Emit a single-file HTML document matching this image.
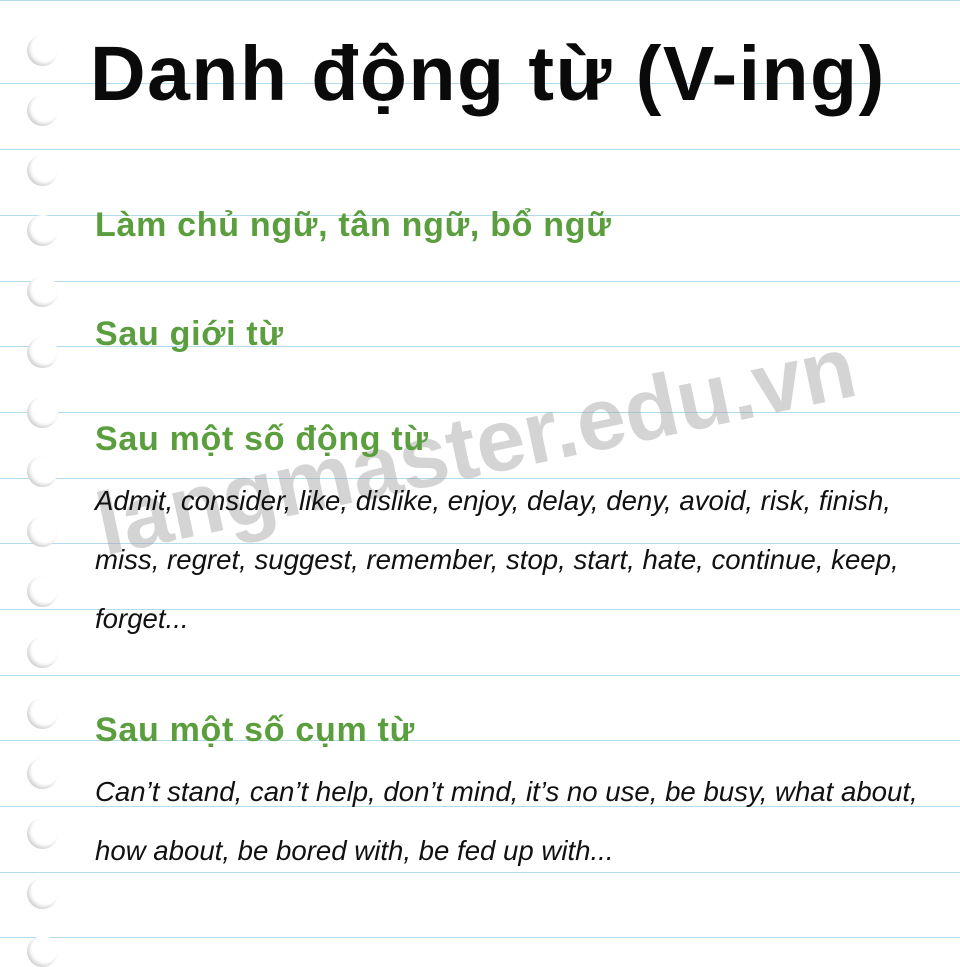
<!DOCTYPE html>
<html><head><meta charset="utf-8"><style>
html,body{margin:0;padding:0}
body{width:960px;height:960px;position:relative;overflow:hidden;background:#fff;font-family:"Liberation Sans","DejaVu Sans",sans-serif}
.l{position:absolute;left:0;width:960px;height:1px;background:#b3dbee}
.h{position:absolute;left:27px;width:31px;height:31px;border-radius:50%;background:radial-gradient(circle at 62% 38%,#fff 50%,#ececec 78%,#d4d4d4 100%);box-shadow:inset 2px -2px 3px rgba(0,0,0,.12)}
.t{position:absolute;white-space:nowrap}
.title{left:90px;top:30px;font-size:77px;font-weight:bold;color:#0a0a0a;letter-spacing:1.5px}
.g{left:95px;font-size:34px;font-weight:bold;color:#5a9e3e;letter-spacing:.7px}
.i{left:95px;font-size:27.6px;font-style:italic;color:#111}
.wm{left:98px;top:475px;font-size:88px;font-weight:bold;color:rgba(160,160,160,.45);transform:rotate(-12deg);transform-origin:left center}
</style></head><body>
<div class="l" style="top:0"></div>
<div class="l" style="top:83px"></div><div class="l" style="top:149px"></div><div class="l" style="top:215px"></div><div class="l" style="top:281px"></div><div class="l" style="top:346px"></div><div class="l" style="top:412px"></div><div class="l" style="top:478px"></div><div class="l" style="top:543px"></div><div class="l" style="top:609px"></div><div class="l" style="top:675px"></div><div class="l" style="top:740px"></div><div class="l" style="top:806px"></div><div class="l" style="top:872px"></div><div class="l" style="top:937px"></div>
<div class="h" style="top:35px"></div><div class="h" style="top:95px"></div><div class="h" style="top:155px"></div><div class="h" style="top:215px"></div><div class="h" style="top:276px"></div><div class="h" style="top:337px"></div><div class="h" style="top:397px"></div><div class="h" style="top:456px"></div><div class="h" style="top:516px"></div><div class="h" style="top:576px"></div><div class="h" style="top:637px"></div><div class="h" style="top:698px"></div><div class="h" style="top:758px"></div><div class="h" style="top:818px"></div><div class="h" style="top:878px"></div><div class="h" style="top:936px"></div>
<div class="t wm">langmaster.edu.vn</div>
<div class="t title">Danh động từ (V-ing)</div>
<div class="t g" style="top:206px">Làm chủ ngữ, tân ngữ, bổ ngữ</div>
<div class="t g" style="top:315px">Sau giới từ</div>
<div class="t g" style="top:420px">Sau một số động từ</div>
<div class="t i" style="top:485px">Admit, consider, like, dislike, enjoy, delay, deny, avoid, risk, finish,</div>
<div class="t i" style="top:544px">miss, regret, suggest, remember, stop, start, hate, continue, keep,</div>
<div class="t i" style="top:603px">forget...</div>
<div class="t g" style="top:711px">Sau một số cụm từ</div>
<div class="t i" style="top:776px">Can’t stand, can’t help, don’t mind, it’s no use, be busy, what about,</div>
<div class="t i" style="top:835px">how about, be bored with, be fed up with...</div>
</body></html>
